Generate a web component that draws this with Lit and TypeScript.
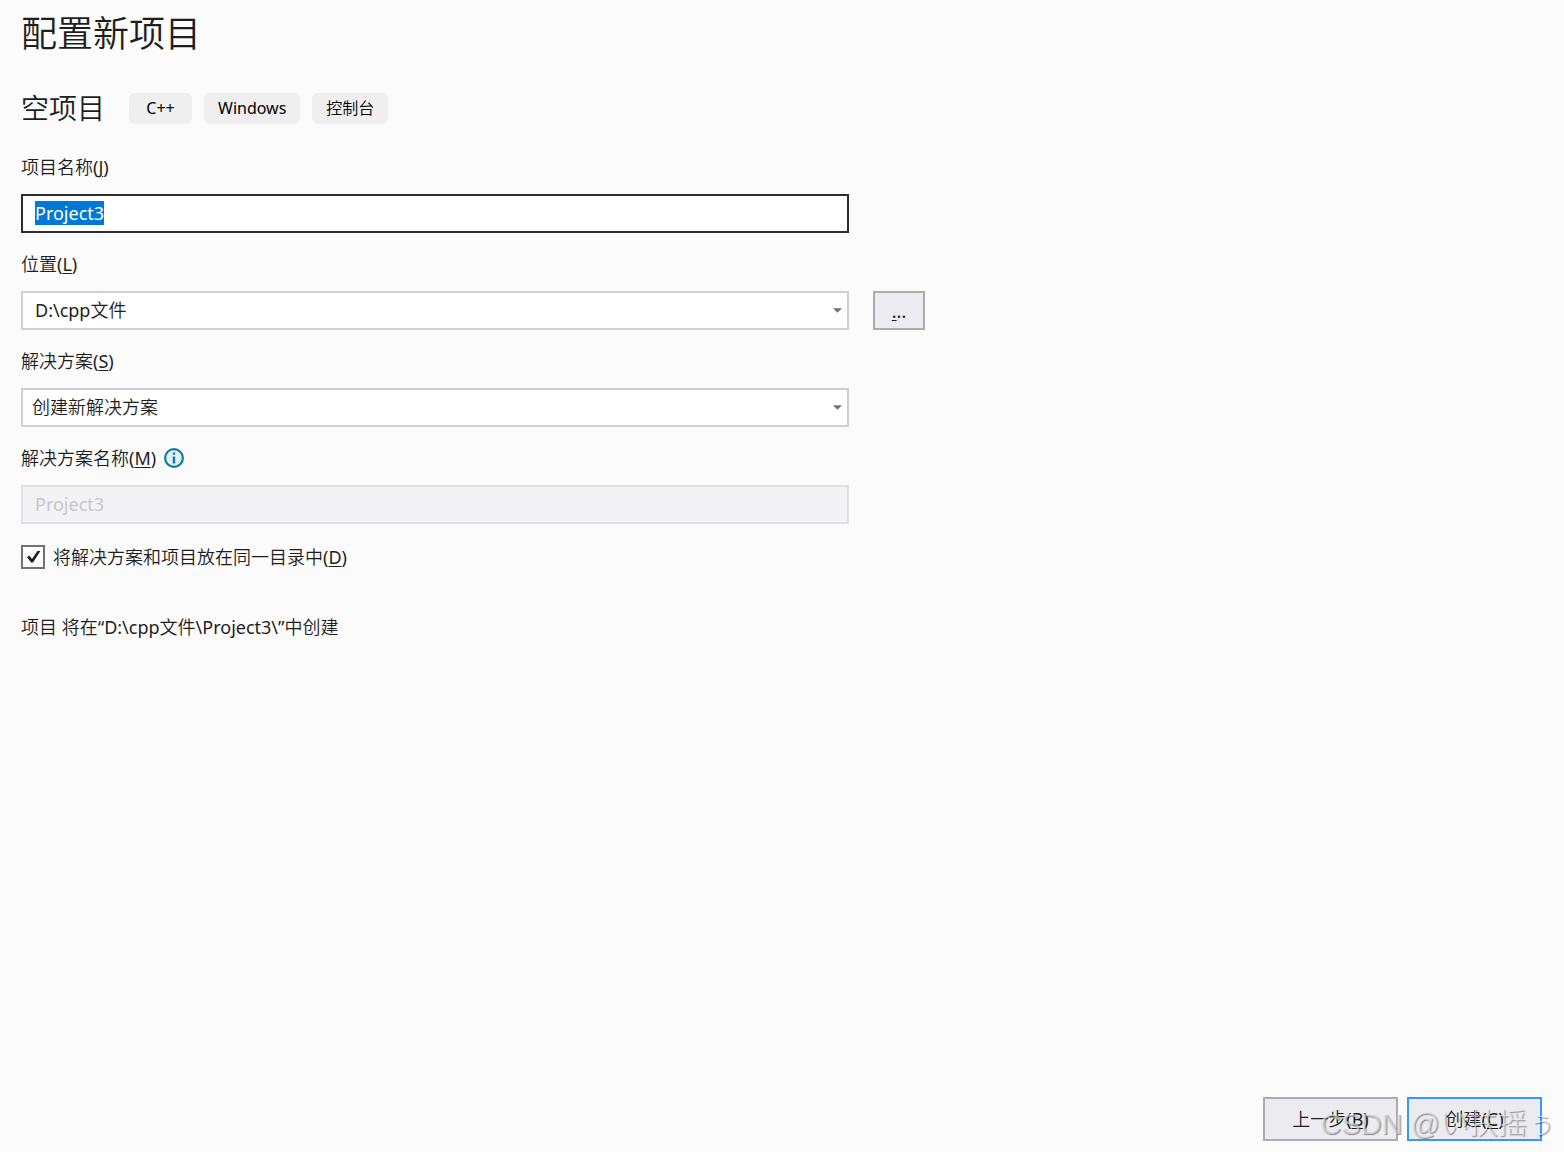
import { LitElement, html, css } from "lit";
import { customElement, query } from "lit/decorators.js";

@customElement("app-root")
export class AppRoot extends LitElement {
  static styles = css`
    :host {
      display: block;
      --text: #1e1e1e;
      --line: #cccedb;
      --face: #ebebf0;
      font-family: "Noto Sans", "Noto Sans CJK SC DemiLight", "Noto Sans CJK SC", sans-serif;
      font-size: 18px;
      line-height: 24px;
      color: var(--text);
    }
    * {
      box-sizing: border-box;
    }
    .page {
      position: relative;
      display: flex;
      flex-direction: column;
      min-height: 100vh;
      padding: 8px 22px 11px 21px;
      background: #fbfbfb;
    }
    h1,
    h2,
    p {
      margin: 0;
      font-weight: 400;
    }
    h1 {
      font-size: 36px;
      line-height: 52px;
    }
    .template {
      display: flex;
      align-items: center;
      gap: 24px;
      margin-top: 28px;
      height: 40px;
    }
    h2 {
      font-size: 28px;
      line-height: 40px;
    }
    .tags {
      display: flex;
      gap: 12px;
      margin: 0;
      padding: 0;
      list-style: none;
      font-size: 16px;
      color: #000;
    }
    .tag {
      min-width: 63px;
      padding: 0 14px;
      border-radius: 6px;
      background: #efeff0;
      line-height: 31px;
      text-align: center;
    }
    .fields {
      display: flex;
      flex-direction: column;
      gap: 19px;
      margin-top: 27px;
    }
    .field {
      display: grid;
      grid-template-columns: minmax(0, 828px) 52px;
      column-gap: 24px;
      row-gap: 15px;
    }
    .caption {
      grid-column: 1 / -1;
      display: flex;
      align-items: center;
      gap: 8px;
    }
    u {
      text-underline-offset: 2px;
      text-decoration-thickness: 1px;
    }
    .box,
    button {
      font: inherit;
      color: inherit;
      border: 2px solid var(--line);
      border-radius: 0;
      outline: none;
    }
    .box {
      width: 100%;
      height: 39px;
      margin: 0;
      padding: 0 12px 2px;
      background: #fff;
      appearance: none;
    }
    .box.name {
      border-color: #2d2d30;
    }
    .box:disabled {
      border-color: #e0e1e8;
      background: #f3f3f6;
      color: #c6c7cc;
    }
    .box::selection {
      background: #0078d7;
      color: #fff;
    }
    .combo {
      display: grid;
      align-items: center;
    }
    .combo > * {
      grid-area: 1 / 1;
    }
    .choice {
      padding-left: 9px;
    }
    .arrow {
      justify-self: end;
      margin-right: 7px;
      pointer-events: none;
    }
    button {
      border-color: #acacac;
      background: var(--face);
      padding: 0;
    }
    .check {
      display: flex;
      align-items: center;
      gap: 8px;
      margin-top: 21px;
    }
    .tick {
      display: grid;
    }
    .tick > * {
      grid-area: 1 / 1;
    }
    .tick input {
      appearance: none;
      width: 24px;
      height: 24px;
      margin: 0;
      border: 2px solid #717171;
      background: #fdfdfd;
    }
    .tick svg {
      pointer-events: none;
      visibility: hidden;
    }
    .tick input:checked + svg {
      visibility: visible;
    }
    .summary {
      margin-top: 46px;
    }
    .actions {
      display: flex;
      justify-content: flex-end;
      gap: 9px;
      margin-top: auto;
    }
    .actions button {
      width: 135px;
      height: 44px;
    }
    .actions .primary {
      border-color: #3399ff;
    }
    .watermark {
      position: absolute;
      right: 8px;
      bottom: 8px;
      font-size: 29px;
      line-height: 40px;
      font-family: "Liberation Sans", "Noto Sans CJK SC", sans-serif;
      font-weight: 300;
      color: rgba(240, 240, 243, 0.6);
      text-shadow: 1px 1px 1px rgba(0, 0, 0, 0.4);
      pointer-events: none;
    }
  `;

  @query(".name") private nameBox!: HTMLInputElement;

  firstUpdated() {
    this.nameBox.focus();
    this.nameBox.select();
  }

  private arrow() {
    return html`<svg class="arrow" width="9" height="5" viewBox="0 0 9 5" aria-hidden="true">
      <path d="M0 0.2H9L4.5 4.8Z" fill="#717171" />
    </svg>`;
  }

  render() {
    return html`
      <main class="page">
        <h1>配置新项目</h1>
        <div class="template">
          <h2>空项目</h2>
          <ul class="tags">
            ${["C++", "Windows", "控制台"].map((t) => html`<li class="tag">${t}</li>`)}
          </ul>
        </div>
        <div class="fields">
          <div class="field">
            <label class="caption" for="name"><span>项目名称(<u>J</u>)</span></label>
            <input class="box name" id="name" type="text" value="Project3" spellcheck="false" />
          </div>
          <div class="field">
            <label class="caption" for="location"><span>位置(<u>L</u>)</span></label>
            <div class="combo">
              <select class="box" id="location">
                <option>D:\\cpp文件</option>
              </select>
              ${this.arrow()}
            </div>
            <button type="button"><u>.</u>..</button>
          </div>
          <div class="field">
            <label class="caption" for="solution"><span>解决方案(<u>S</u>)</span></label>
            <div class="combo">
              <select class="box choice" id="solution">
                <option>创建新解决方案</option>
              </select>
              ${this.arrow()}
            </div>
          </div>
          <div class="field">
            <label class="caption" for="solution-name">
              <span>解决方案名称(<u>M</u>)</span>
              <svg width="20" height="20" viewBox="0 0 20 20" aria-hidden="true">
                <circle cx="10" cy="10" r="8.9" fill="#e3eff3" stroke="#0f7ea5" stroke-width="2.2" />
                <path d="M8.8 4.5h2.4v2.2H8.8zM8.8 8.4h2.4v7.2H8.8z" fill="#0f7ea5" />
              </svg>
            </label>
            <input class="box" id="solution-name" type="text" value="Project3" disabled />
          </div>
        </div>
        <label class="check">
          <span class="tick">
            <input type="checkbox" checked />
            <svg width="24" height="24" viewBox="0 0 24 24" aria-hidden="true">
              <path d="M6 12.2L8.4 10.6L11 14L16.4 6H19.4L12 17.6H10.2Z" fill="#1e1e1e" />
            </svg>
          </span>
          <span>将解决方案和项目放在同一目录中(<u>D</u>)</span>
        </label>
        <p class="summary">项目 将在“D:\\cpp文件\\Project3\\”中创建</p>
        <div class="actions">
          <button type="button">上一步(<u>B</u>)</button>
          <button type="button" class="primary">创建(<u>C</u>)</button>
        </div>
        <div class="watermark">CSDN @い扶摇ぅ</div>
      </main>
    `;
  }
}
